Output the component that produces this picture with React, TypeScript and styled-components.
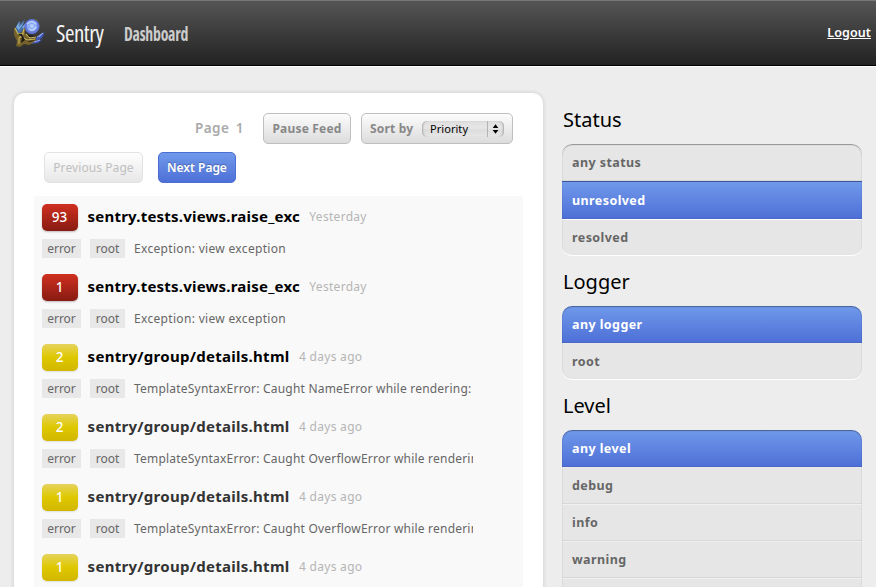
import React from "react";
import styled, { createGlobalStyle, css } from "styled-components";

const GlobalStyle = createGlobalStyle`
  * { box-sizing: border-box; }
  body {
    margin: 0;
    height: 587px;
    overflow: hidden;
    background: #ededed;
    color: #000;
    font-family: "Noto Sans", "Lucida Grande", sans-serif;
    font-size: 12px;
  }
`;

const Header = styled.header`
  display: flex;
  align-items: flex-start;
  height: 66px;
  padding: 0 5px 0 14px;
  background: linear-gradient(#555, #222);
  border-top: 1px solid #777;
  border-bottom: 1px solid #000;
  box-shadow: 0 1px 0 #fff;
`;

const Logo = styled.svg`
  width: 32px;
  height: 32px;
  margin-top: 15px;
`;

const Brand = styled.span`
  width: 68px;
  padding-left: 10px;
  font: 23px/34px "Open Sans", sans-serif;
  font-stretch: 75%;
  letter-spacing: -0.5px;
  color: #f4f4f4;
  margin-top: 15px;
`;

const NavLink = styled.a`
  margin: 16px 0 0 10px;
  font: bold 19.5px/34px "Open Sans", sans-serif;
  font-stretch: 75%;
  letter-spacing: -0.3px;
  transform: scaleX(0.81);
  transform-origin: left;
  color: #ccc;
`;

const Logout = styled.a`
  margin: 22px 0 0 auto;
  font-weight: 600;
  font-size: 12.5px;
  line-height: 20px;
  letter-spacing: 0.1px;
  color: #fff;
  text-decoration: underline;
`;

const Page = styled.div`
  display: flex;
  align-items: flex-start;
  gap: 19px;
  height: 521px;
  padding: 27px 14px 0;
  overflow: hidden;
`;

const Card = styled.main`
  width: 529px;
  height: 540px;
  padding: 20px 20px 0;
  background: #fff;
  border-radius: 10px;
  box-shadow: 0 0 4px rgba(0, 0, 0, 0.16);
`;

const Toolbar = styled.div`
  display: flex;
  justify-content: flex-end;
  align-items: center;
  gap: 10px;
  padding-right: 10px;
`;

const PageNumber = styled.span`
  margin-right: 9px;
  height: 31px;
  font-size: 13.5px;
  line-height: 31px;
  font-weight: 600;
  letter-spacing: 0.45px;
  word-spacing: 2.5px;
  color: #aaa;
`;

const Pager = styled.div`
  display: flex;
  gap: 15px;
  margin: 8px 0 13px;
  padding-left: 10px;
`;

type Tone = "normal" | "disabled" | "primary";

const tones = {
  normal: css`
    color: #888;
    border-color: #bfbfbf;
    background: linear-gradient(#fcfcfc, #dcdcdc);
    font-weight: bold;
    letter-spacing: 0.2px;
  `,
  disabled: css`
    color: #c0c0c0;
    border-color: #e2e2e2;
    background: linear-gradient(#fefefe, #e7e7e7);
    letter-spacing: 0.08px;
  `,
  primary: css`
    color: #fff;
    border-color: #4c6dd4;
    background: linear-gradient(#7099ea, #4e70d7);
    font-weight: 600;
    letter-spacing: -0.02px;
    text-shadow: 0 -1px 1px rgba(0, 0, 0, 0.25);
  `,
};

const Button = styled.button<{ $tone?: Tone; $width: number }>`
  width: ${(p) => p.$width}px;
  height: 31px;
  padding: 0;
  border: 1px solid;
  border-radius: 5px;
  font-family: inherit;
  font-size: 12px;
  line-height: 28px;
  white-space: nowrap;
  ${(p) => tones[p.$tone ?? "normal"]}
`;

const SortBox = styled.div`
  display: flex;
  align-items: center;
  width: 152px;
  height: 31px;
  padding: 0 8px;
  border: 1px solid;
  border-radius: 5px;
  ${tones.normal}
`;

const Select = styled.span`
  display: flex;
  align-items: center;
  width: 82px;
  height: 16px;
  margin-left: auto;
  padding-left: 8px;
  border-radius: 5px;
  background: linear-gradient(#dedede, #e7e7e7 45%, #dcdcdc 55%, #e8e8e8);
  box-shadow: inset 2px 0 2px -1px #aaa, inset -2px 0 2px -1px #aaa;
  font-size: 11px;
  font-weight: 400;
  letter-spacing: 0.05px;
  color: #000;
`;

const Arrows = styled.svg`
  width: 17px;
  height: 16px;
  margin-left: auto;
  border-left: 1px solid #b4b4b4;
`;

const Feed = styled.ul`
  height: 400px;
  margin: 0;
  padding: 8px 8px 0;
  list-style: none;
  background: #f9f9f9;
`;

const Event = styled.li`
  height: 70px;
`;

const EventHead = styled.div`
  display: flex;
  align-items: center;
  height: 27px;
`;

const Badge = styled.span<{ $level: "high" | "low" }>`
  width: 36px;
  height: 27px;
  margin-right: 9.6px;
  padding-right: 1px;
  border-radius: 5px;
  text-align: center;
  font-size: 13.5px;
  line-height: 26px;
  font-weight: 500;
  color: #fff;
  background: ${(p) =>
    p.$level === "high"
      ? "linear-gradient(#cf3020, #871b12)"
      : "linear-gradient(#e6d35c, #dec800 50%, #d2b600)"};
  box-shadow: 0 1px 2px rgba(0, 0, 0, ${(p) => (p.$level === "high" ? 0.25 : 0.1)});
`;

const Title = styled.a<{ $seen: boolean; $track: number }>`
  font-size: 15px;
  font-weight: bold;
  line-height: 25px;
  height: 27px;
  letter-spacing: ${(p) => p.$track}px;
  color: ${(p) => (p.$seen ? "#333" : "#000")};
`;

const When = styled.span`
  margin-left: 9.4px;
  height: 27px;
  line-height: 25px;
  letter-spacing: 0.3px;
  color: #b5b5b5;
`;

const EventBody = styled.div`
  display: flex;
  gap: 9px;
  width: 431px;
  height: 19px;
  margin-top: 8px;
  overflow: hidden;
  line-height: 20px;
  white-space: nowrap;
  color: #666;
`;

const Tag = styled.span<{ $width: number }>`
  flex: 0 0 ${(p) => p.$width}px;
  text-align: center;
  background: #e8e8e8;
`;

const Message = styled.span<{ $track: number }>`
  letter-spacing: ${(p) => p.$track}px;
`;

const Sidebar = styled.aside`
  width: 300px;
`;

const Heading = styled.h2`
  margin: 0;
  height: 51px;
  padding: 13px 0 0 1px;
  font-size: 20px;
  line-height: 28px;
  font-weight: normal;
`;

const Filters = styled.ul`
  position: relative;
  margin: 0;
  padding: 0;
  list-style: none;
  overflow: hidden;
  border-radius: 10px;
  background: #e6e6e6;
  box-shadow: 0 1px 0 #fff;

  &::after {
    content: "";
    position: absolute;
    inset: 0;
    border-radius: 10px;
    box-shadow: inset 0 1px 1px rgba(0, 0, 0, 0.36), inset 0 0 1px rgba(0, 0, 0, 0.14);
  }
`;

const Filter = styled.li<{ $active: boolean }>`
  height: 37px;
  padding-left: 10px;
  font-size: 12.5px;
  line-height: 36px;
  font-weight: bold;
  letter-spacing: 0.42px;
  color: #666;
  border-top: 1px solid #f0f0f0;
  border-bottom: 1px solid #d8d8d8;

  &:first-child {
    border-top: 0;
    line-height: 38px;
  }
  &:last-child {
    height: 36px;
    border-bottom: 0;
  }

  ${(p) =>
    p.$active &&
    css`
      height: 38px;
      line-height: 38px;
      color: #fff;
      background: linear-gradient(#7099ea, #4e70d7);
      border-top-color: #3c559f;
      border-bottom-color: #4a69c4;
      &:first-child { height: 37px; }
      & + li { border-top-color: #fff; }
      &:first-child + li { border-top-color: #e9e9e9; }
    `}
`;

const events = [
  { count: 93, high: true, title: "sentry.tests.views.raise_exc", when: "Yesterday", message: "Exception: view exception", seen: false },
  { count: 1, high: true, title: "sentry.tests.views.raise_exc", when: "Yesterday", message: "Exception: view exception", seen: false },
  { count: 2, high: false, title: "sentry/group/details.html", when: "4 days ago", message: "TemplateSyntaxError: Caught NameError while rendering:", seen: false },
  { count: 2, high: false, title: "sentry/group/details.html", when: "4 days ago", message: "TemplateSyntaxError: Caught OverflowError while rendering:", seen: true },
  { count: 1, high: false, title: "sentry/group/details.html", when: "4 days ago", message: "TemplateSyntaxError: Caught OverflowError while rendering:", seen: true },
  { count: 1, high: false, title: "sentry/group/details.html", when: "4 days ago", message: "TemplateSyntaxError: Caught OverflowError while rendering:", seen: true },
];

const groups = [
  { name: "Status", options: ["any status", "unresolved", "resolved"], active: "unresolved" },
  { name: "Logger", options: ["any logger", "root"], active: "any logger" },
  { name: "Level", options: ["any level", "debug", "info", "warning", "error"], active: "any level" },
];

function SentryLogo() {
  return (
    <Logo viewBox="0 0 32 32">
      <path d="M20 5l1-3 3 2 1 5z" fill="#55532f" />
      <path d="M1 13L5 5 5 9l6-6-3 7 6-5-4 9-7 5z" fill="#466fa8" />
      <path d="M2 11l4-6-1 6 6-6-6 9zM8 11l5-5-3 7z" fill="#79a9dc" />
      <circle cx="18" cy="10.5" r="7.5" fill="#6677dc" />
      <circle cx="18" cy="10" r="5.4" fill="#8eabf5" />
      <path d="M13 8q5-5 9 0M15 13q4 3 7-2" fill="none" stroke="#b9d4ff" strokeWidth="1.5" />
      <circle cx="18" cy="10" r="2" fill="#b4ceff" />
      <path d="M0 11l3 6 4 0 4-6 0 7 7 5 8-3-4 6-7 3-5-1-4 3-4-1 1-5-3-6z" fill="#75622b" />
      <path d="M1 12l3 6 5 0-4 4 0 6M10 13l-2 8 5 3 8-1M12 18l4 4 6-1" fill="none" stroke="#c9b35b" strokeWidth="1.1" />
      <path d="M4 18l4 3-1 6 4-3-3-6zM12 16l3 5 7-1-7-1zM11 24l5 2 6-2-7 1z" fill="#1d1b18" />
      <path d="M22 22l9-6-3 6-6 3zM20 26l9-3-5 4-7 1z" fill="#4058b9" />
      <path d="M23 21l6-4-4 4M20 26l6-2" stroke="#91a6f3" fill="none" />
    </Logo>
  );
}

export default function App() {
  return (
    <>
      <GlobalStyle />
      <Header>
        <SentryLogo />
        <Brand>Sentry</Brand>
        <NavLink>Dashboard</NavLink>
        <Logout>Logout</Logout>
      </Header>
      <Page>
        <Card>
          <Toolbar>
            <PageNumber>Page 1</PageNumber>
            <Button $width={88}>Pause Feed</Button>
            <SortBox>
              Sort by
              <Select>
                Priority
                <Arrows viewBox="0 0 17 16">
                  <path d="M5 7l3-4 3 4zM5 9l3 4 3-4z" fill="#000" />
                </Arrows>
              </Select>
            </SortBox>
          </Toolbar>
          <Pager>
            <Button $tone="disabled" $width={99}>Previous Page</Button>
            <Button $tone="primary" $width={78}>Next Page</Button>
          </Pager>
          <Feed>
            {events.map((e, i) => (
              <Event key={i}>
                <EventHead>
                  <Badge $level={e.high ? "high" : "low"}>{e.count}</Badge>
                  <Title $seen={e.seen} $track={e.high ? 0.21 : 0.28}>{e.title}</Title>
                  <When>{e.when}</When>
                </EventHead>
                <EventBody>
                  <Tag $width={39}>error</Tag>
                  <Tag $width={35}>root</Tag>
                  <Message $track={e.high ? 0.32 : 0.21}>{e.message}</Message>
                </EventBody>
              </Event>
            ))}
          </Feed>
        </Card>
        <Sidebar>
          {groups.map((g) => (
            <React.Fragment key={g.name}>
              <Heading>{g.name}</Heading>
              <Filters>
                {g.options.map((o) => (
                  <Filter key={o} $active={o === g.active}>{o}</Filter>
                ))}
              </Filters>
            </React.Fragment>
          ))}
        </Sidebar>
      </Page>
    </>
  );
}
